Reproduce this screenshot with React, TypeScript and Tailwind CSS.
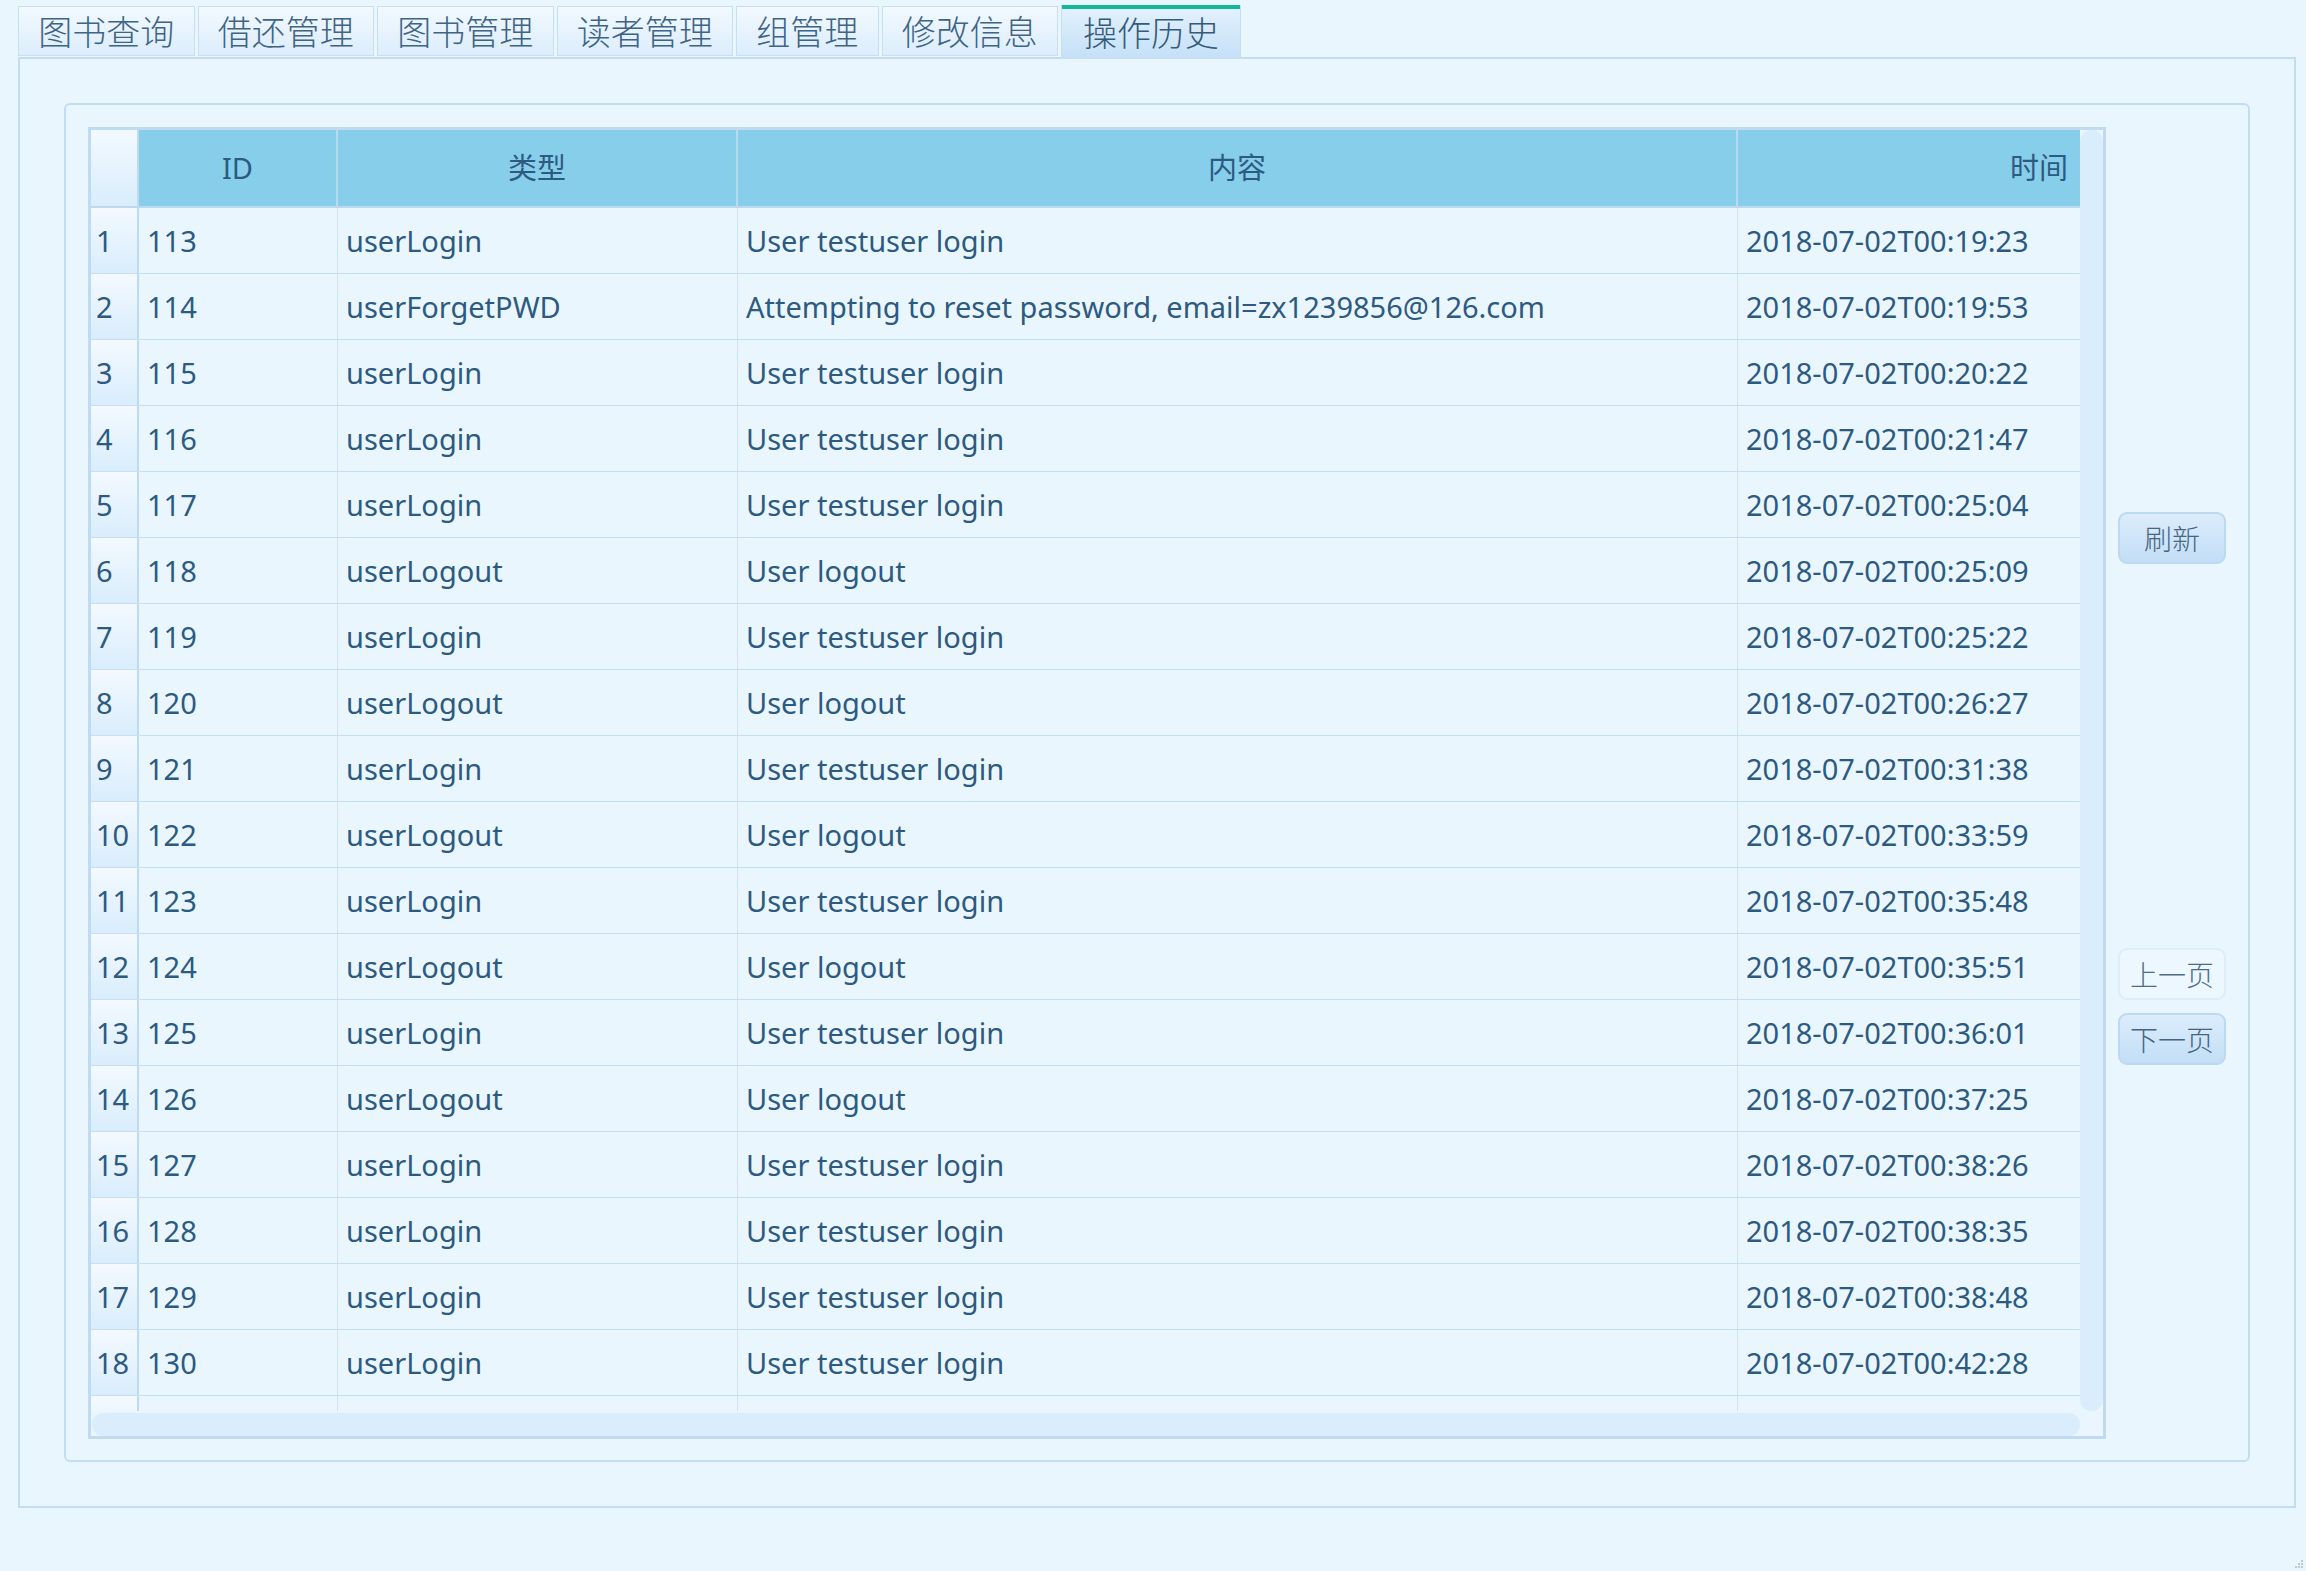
import React from 'react'

const tabs = ['图书查询', '借还管理', '图书管理', '读者管理', '组管理', '修改信息', '操作历史']

const rows: [number, string, string, string][] = [
  [113, 'userLogin', 'User testuser login', '2018-07-02T00:19:23'],
  [114, 'userForgetPWD', 'Attempting to reset password, email=zx1239856@126.com', '2018-07-02T00:19:53'],
  [115, 'userLogin', 'User testuser login', '2018-07-02T00:20:22'],
  [116, 'userLogin', 'User testuser login', '2018-07-02T00:21:47'],
  [117, 'userLogin', 'User testuser login', '2018-07-02T00:25:04'],
  [118, 'userLogout', 'User logout', '2018-07-02T00:25:09'],
  [119, 'userLogin', 'User testuser login', '2018-07-02T00:25:22'],
  [120, 'userLogout', 'User logout', '2018-07-02T00:26:27'],
  [121, 'userLogin', 'User testuser login', '2018-07-02T00:31:38'],
  [122, 'userLogout', 'User logout', '2018-07-02T00:33:59'],
  [123, 'userLogin', 'User testuser login', '2018-07-02T00:35:48'],
  [124, 'userLogout', 'User logout', '2018-07-02T00:35:51'],
  [125, 'userLogin', 'User testuser login', '2018-07-02T00:36:01'],
  [126, 'userLogout', 'User logout', '2018-07-02T00:37:25'],
  [127, 'userLogin', 'User testuser login', '2018-07-02T00:38:26'],
  [128, 'userLogin', 'User testuser login', '2018-07-02T00:38:35'],
  [129, 'userLogin', 'User testuser login', '2018-07-02T00:38:48'],
  [130, 'userLogin', 'User testuser login', '2018-07-02T00:42:28'],
]

const cols = 'grid grid-cols-[48px_199px_400px_1000px_342px]'
const cell = 'flex items-center pl-[8px] border-r border-[#cfe3f4] whitespace-nowrap overflow-hidden'
const rowHead =
  'flex items-center pl-[5px] border-r-2 border-[#bfdaf0] bg-linear-to-b from-[#f3f9ff] to-[#d9edfc]'

const Tab: React.FC<{ label: string; active?: boolean }> = ({ label, active }) =>
  active ? (
    <div className="relative z-10 -mb-[2px] flex h-[54px] items-start border-x border-[#c6def2] bg-linear-to-b from-[#e4f2fe] to-[#c4e0f6] px-[21px]">
      <div className="absolute inset-x-0 top-0 h-[4px] bg-[#12b89a]" />
      <span className="mt-[7px] text-[34px] leading-[40px] font-light text-[#345a7c]">{label}</span>
    </div>
  ) : (
    <div className="mb-[1px] flex h-[50px] items-center border border-[#c8dff2] bg-linear-to-b from-[#f2f9ff] to-[#dcedfc] px-[19.25px]">
      <span className="text-[34px] leading-[40px] font-light text-[#3e6486]">{label}</span>
    </div>
  )

const Button: React.FC<{ label: string; flat?: boolean; className?: string }> = ({ label, flat, className }) => (
  <div
    className={`flex h-[52px] w-[108px] items-center justify-center rounded-[9px] border-2 ${
      flat
        ? 'border-[#deedf9] bg-[#edf7ff] text-[#4f6d88]'
        : 'border-[#bcd9f2] bg-linear-to-b from-[#dcedfc] to-[#c2def6] text-[#46657f]'
    } ${className ?? ''}`}
  >
    <span className="text-[28px] leading-none font-light">{label}</span>
  </div>
)

export default function App() {
  return (
    <div className="relative flex h-[1571px] w-[2306px] flex-col overflow-hidden bg-[#eaf6fe] px-[18px] pt-[5px] font-['Noto_Sans','Noto_Sans_CJK_SC',sans-serif] text-[#2d5a80]">
      <div className="flex h-[52px] items-end gap-[3px] font-['Noto_Sans_CJK_SC',sans-serif]">
        {tabs.map((t, i) => (
          <Tab key={t} label={t} active={i === tabs.length - 1} />
        ))}
      </div>

      <div className="h-[1451px] w-[2278px] border-2 border-[#c2dcf3] p-[44px]">
        <div className="flex h-full w-full gap-[12px] rounded-[6px] border-2 border-[#c2dcf3] p-[22px]">
          <div className="flex h-[1312px] w-[2018px] flex-col border-[3px] border-[#bfdaf1]">
            <div className="flex min-h-0 flex-1">
              <div className="w-[1989px] overflow-hidden text-[29px]">
                <div className={`${cols} h-[78px] border-b-2 border-[#bcd9f0]`}>
                  <div className="border-r-2 border-[#bfdaf0] bg-linear-to-b from-[#f3f9ff] to-[#d9edfc]" />
                  <div className="flex items-center justify-center border-r-2 border-[#b4dcef] bg-[#87ceeb]">ID</div>
                  <div className="flex items-center justify-center border-r-2 border-[#b4dcef] bg-[#87ceeb]">类型</div>
                  <div className="flex items-center justify-center border-r-2 border-[#b4dcef] bg-[#87ceeb]">内容</div>
                  <div className="flex items-center justify-end bg-[#87ceeb] pr-[12px]">时间</div>
                </div>
                {rows.map(([id, type, content, time], i) => (
                  <div key={id} className={`${cols} h-[66px] border-b border-[#c6def2]`}>
                    <div className={rowHead}>{i + 1}</div>
                    <div className={cell}>{id}</div>
                    <div className={cell}>{type}</div>
                    <div className={cell}>{content}</div>
                    <div className={`${cell} border-r-0`}>{time}</div>
                  </div>
                ))}
                <div className={`${cols} h-[66px]`}>
                  <div className={rowHead} />
                  <div className={cell} />
                  <div className={cell} />
                  <div className={cell} />
                  <div className={`${cell} border-r-0`} />
                </div>
              </div>
              <div className="w-[23px] rounded-full bg-[#d9edfd]" />
            </div>
            <div className="flex h-[25px] pt-[2px]">
              <div className="ml-[1px] flex-1 rounded-full bg-[#d9edfd]" />
              <div className="w-[23px]" />
            </div>
          </div>

          <div className="flex flex-col font-['Noto_Sans_CJK_SC',sans-serif]">
            <Button label="刷新" className="mt-[385px]" />
            <Button label="上一页" flat className="mt-[384px]" />
            <Button label="下一页" className="mt-[13px]" />
          </div>
        </div>
      </div>

      <div className="flex flex-1 items-end justify-end -mr-[16px] pb-[2px]">
        <svg width="10" height="10" viewBox="0 0 10 10">
          <rect x="7" y="1" width="2" height="2" fill="#b9c9d6" />
          <rect x="4" y="4" width="2" height="2" fill="#b9c9d6" />
          <rect x="7" y="4" width="2" height="2" fill="#b9c9d6" />
          <rect x="1" y="7" width="2" height="2" fill="#b9c9d6" />
          <rect x="4" y="7" width="2" height="2" fill="#b9c9d6" />
          <rect x="7" y="7" width="2" height="2" fill="#b9c9d6" />
        </svg>
      </div>
    </div>
  )
}
